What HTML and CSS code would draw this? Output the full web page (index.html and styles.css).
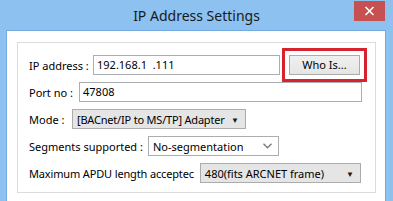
FILE: index.html
```html
<!DOCTYPE html>
<html>
<head>
<meta charset="utf-8">
<link rel="stylesheet" href="styles.css">
</head>
<body>
<div class="window">
  <div class="titlebar">
    <span class="spacer"></span>
    <span class="title">IP Address Settings</span>
    <span class="close">
      <svg width="11" height="10" viewBox="0 0 11 10"><path d="M1.5 1 L9.5 9 M9.5 1 L1.5 9" stroke="#fff" stroke-width="1.6" fill="none"/></svg>
    </span>
  </div>
  <div class="client">
    <div class="group">
      <div class="row">
        <span class="label l-ip">IP address :</span>
        <span class="field f-ip">192.168.1  .111</span>
        <span class="button">Who Is...</span>
      </div>
      <div class="row">
        <span class="label l-port">Port no :</span>
        <span class="field f-port">47808</span>
      </div>
      <div class="row">
        <span class="label l-mode">Mode :</span>
        <span class="combo gray f-mode"><span class="ctext tight">[BACnet/IP to MS/TP] Adapter</span><span class="tri">▼</span></span>
      </div>
      <div class="row">
        <span class="label l-seg">Segments supported :</span>
        <span class="combo f-seg"><span class="ctext">No-segmentation</span>
          <svg class="chev" width="9" height="6" viewBox="0 0 9 6"><path d="M0.5 0.8 L4.5 4.8 L8.5 0.8" stroke="#777" stroke-width="1.3" fill="none"/></svg>
        </span>
      </div>
      <div class="row">
        <span class="label l-apdu">Maximum APDU length acceptec</span>
        <span class="combo gray f-apdu"><span class="ctext">480(fits ARCNET frame)</span><span class="tri">▼</span></span>
      </div>
    </div>
  </div>
</div>
</body>
</html>
```

FILE: styles.css
```css
html, body {
  margin: 0;
  padding: 0;
}
body {
  width: 393px;
  height: 201px;
  overflow: hidden;
  background: #8cc1f0;
  font-family: "Segoe UI", "Noto Sans", "Open Sans", sans-serif;
  color: #000;
}
.window {
  width: 393px;
  height: 201px;
  background: #8cc1f0;
}
.titlebar {
  height: 30px;
  display: grid;
  grid-template-columns: 1fr auto 1fr;
  align-items: start;
}
.title {
  font-size: 14px;
  line-height: 31px;
  color: #1a1a1a;
}
.close {
  justify-self: end;
  width: 31px;
  height: 20px;
  margin-top: 1px;
  margin-right: 8px;
  background: #c75050;
  display: flex;
  align-items: center;
  justify-content: center;
}
.client {
  margin-left: 6px;
  margin-right: 7px;
  height: 159px;
  background: #fff;
  border: 1px solid #74aadf;
  border-bottom: none;
  padding: 11px 9px 0 10px;
}
.group {
  border: 1px solid #dcdcdc;
  height: 137px;
  padding: 12px 0 0 11px;
  display: flex;
  flex-direction: column;
  gap: 7px;
}
.row {
  display: flex;
  align-items: center;
  height: 20px;
  gap: 6px;
  font-size: 11px;
}
.label {
  white-space: nowrap;
  flex: none;
}
.l-ip { width: 58px; }
.l-port { width: 44px; }
.l-mode { width: 37px; }
.l-seg { width: 113px; }
.l-apdu { letter-spacing: -0.15px; }
.field {
  box-sizing: border-box;
  height: 20px;
  border: 1px solid #abadb3;
  padding: 0 3px;
  line-height: 18px;
  white-space: pre;
  flex: none;
}
.f-ip { width: 187px; }
.f-port { width: 283px; }
.button {
  box-sizing: border-box;
  margin-left: 3px;
  width: 71px;
  height: 20px;
  border: 1px solid #acacac;
  background: linear-gradient(#f0f0f0, #e5e5e5);
  text-align: center;
  line-height: 18px;
  outline: 3px solid #d6232c;
  outline-offset: 4px;
}
.combo {
  box-sizing: border-box;
  height: 20px;
  border: 1px solid #abadb3;
  background: #fff;
  display: flex;
  align-items: center;
  justify-content: space-between;
  padding: 0 6px 0 4px;
  flex: none;
}
.combo.gray {
  background: #e5e5e5;
  border-color: #acacac;
}
.ctext {
  white-space: nowrap;
}
.tight {
  letter-spacing: -0.2px;
}
.tri {
  font-size: 8px;
  color: #1a1a1a;
}
.f-mode { width: 174px; }
.f-seg { width: 131px; }
.f-apdu { width: 161px; }
```
